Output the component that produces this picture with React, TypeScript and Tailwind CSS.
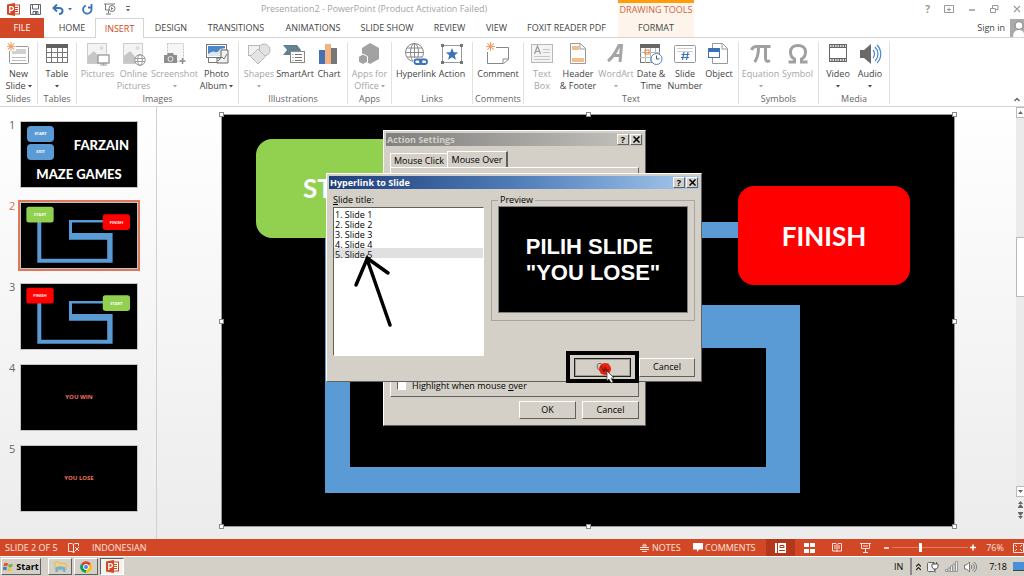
import type { ReactNode } from "react";

const BLUE = "#5b9bd5";
const GREEN = "#92d050";
const RED = "#ff0000";

function Svg({ w, h, children }: { w: number; h: number; children: ReactNode }) {
  return (
    <svg width={w} height={h} viewBox={`0 0 ${w} ${h}`} fill="none" className="block shrink-0" aria-hidden="true">
      {children}
    </svg>
  );
}

function PowerPointIcon() {
  return (
    <Svg w={13} h={13}>
      <rect x="6" y="2" width="6.5" height="9" fill="#fff" stroke="#d24726" />
      <path d="M8 4.5h3M8 6.5h3M8 8.5h3" stroke="#d24726" />
      <path d="M0 1.5 8 0v13L0 11.5z" fill="#d24726" />
      <path d="M2.8 10V3.6h1.7a1.8 1.8 0 0 1 0 3.7H2.8" stroke="#fff" strokeWidth="1.3" />
    </Svg>
  );
}

/* ---------- ribbon icons, 24 x 24 ---------- */

const G = "#777";
const L = "#b8b8b8";

const spark = (
  <path d="M5 0v10M0 5h10M1.5 1.5l7 7M8.5 1.5l-7 7" stroke="#f3a06b" strokeWidth="1.2" />
);

const icons: Record<string, ReactNode> = {
  newSlide: (
    <>
      <rect x="2.5" y="4.5" width="19" height="17" rx="1" fill="#fff" stroke="#999" />
      <rect x="5" y="7" width="14" height="5" fill="#d0d0d0" />
      <path d="M5 15.5h14M5 18.5h14" stroke="#bbb" />
      <rect x="0" y="0" width="9" height="9" fill="#fff" />
      <g transform="translate(-.5 0) scale(.9)">{spark}</g>
    </>
  ),
  table: (
    <>
      <rect x="1.5" y="2.5" width="21" height="18" fill="#fff" stroke={G} />
      <rect x="1" y="2" width="22" height="4" fill="#606060" />
      <path d="M1 10.5h22M1 15.5h22M6.5 6v15M12.5 6v15M17.5 6v15" stroke={G} />
    </>
  ),
  pictures: (
    <>
      <rect x="1.5" y="1.5" width="19" height="20" fill="#f4f4f4" stroke="#ccc" />
      <circle cx="15.5" cy="6" r="2" fill="#ddd" />
      <path d="M2 21V14l6-5 7 8v4z" fill="#c6c6c6" />
      <rect x="12" y="13" width="11" height="8" fill="#fff" stroke="#999" strokeWidth="1.3" />
      <path d="M17.5 21v2M14 23h7" stroke="#999" strokeWidth="1.2" />
    </>
  ),
  online: (
    <>
      <rect x="1.5" y="1.5" width="19" height="20" fill="#f4f4f4" stroke="#ccc" />
      <circle cx="15.5" cy="6" r="2" fill="#ddd" />
      <path d="M2 21V14l6-5 7 8v4z" fill="#c6c6c6" />
      <circle cx="18" cy="18" r="5.3" fill="#fff" stroke="#999" />
      <ellipse cx="18" cy="18" rx="2.3" ry="5.3" stroke="#999" />
      <path d="M13 16.5h10M13 19.5h10" stroke="#999" />
    </>
  ),
  screenshot: (
    <>
      <rect x="4.5" y="1.5" width="16" height="18" fill="#f6f6f6" stroke="#c4c4c4" strokeDasharray="2 1" />
      <path d="M1 13h3l1-2h5l1 2h3v8H1z" fill="#8e8e8e" />
      <circle cx="7.5" cy="17" r="2.5" fill="#8e8e8e" stroke="#eee" />
      <path d="M19.5 16v6M16.500 19h6" stroke="#8e8e8e" strokeWidth="1.5" />
    </>
  ),
  photoAlbum: (
    <>
      <rect x="1.5" y="2.5" width="20" height="13" fill="#fff" stroke={G} />
      <rect x="3" y="4" width="17" height="10" fill="#4a86c8" />
      <path d="M3 12c3-2 5-3 7-2s4-1 5-3l5-1v8H3z" fill="#dfe7ee" />
      <path d="M3.5 16v4.500h10" stroke={G} />
      <path d="M12 16h4V8h7v13H12z" fill="#f0f0f0" stroke="#666" />
      <path d="m13 19 4-4 2 2 3-5" stroke="#777" />
    </>
  ),
  shapes: (
    <>
      <circle cx="17" cy="8" r="6" fill="#e2e2e2" stroke={L} />
      <rect x="1.5" y="3.5" width="11" height="10" fill="#f1f1f1" stroke={L} />
      <path d="m11 7 7.5 7.5L11 22l-7.5-7.5z" fill="#e4e4e4" stroke={L} />
    </>
  ),
  smartArt: (
    <>
      <path d="M0 3h14l4 5-4 5H0l4-5z" fill="#5f7f96" />
      <path d="M3 6h11M5 9h10" stroke="#86a774" strokeDasharray="1 2" />
      <rect x="7.5" y="9.5" width="14" height="11" fill="#fff" stroke="#888" />
      <path d="M9.5 12.5h1M12 12.5h7M9.5 15.5h1M12 15.5h7M9.5 18.5h1M12 18.5h7" stroke="#777" />
    </>
  ),
  chart: (
    <>
      <rect x="2" y="8" width="6" height="14" fill="#4472b4" />
      <rect x="8" y="2" width="6" height="20" fill="#f4b183" />
      <rect x="14" y="6" width="6" height="16" fill="#777" />
    </>
  ),
  apps: (
    <>
      <path d="m12 1 9 5v11l-9 5-8-5V6z" fill="#a2a2a2" />
      <path d="m5 12 4.500 2.500v5.500L5 22.500.5 20v-5.500z" fill="#a2a2a2" stroke="#fff" />
    </>
  ),
  hyperlink: (
    <>
      <circle cx="10.5" cy="10.5" r="9" fill="#fff" stroke="#888" />
      <ellipse cx="10.5" cy="10.5" rx="4" ry="9" stroke="#888" />
      <path d="M10.5 1.5v18M1.5 10.5h18M3 6h15M3 15h15" stroke="#888" />
      <rect x="9" y="16" width="15" height="8" fill="#fff" />
      <rect x="10.5" y="17.500" width="7" height="4.500" rx="2.200" stroke="#3c72b8" strokeWidth="1.8" />
      <rect x="16" y="17.500" width="7" height="4.500" rx="2.200" stroke="#3c72b8" strokeWidth="1.8" />
    </>
  ),
  action: (
    <>
      <rect x="2.5" y="3.5" width="19" height="17" fill="#fff" stroke="#999" />
      <path d="M1 2h3v3H1zM20 2h3v3h-3zM1 19h3v3H1zM20 19h3v3h-3z" fill="#777" />
      <path d="m12 6 1.7 4.2 4.5.3-3.5 2.8 1.2 4.4L12 15.2l-3.900 2.500 1.200-4.400-3.500-2.800 4.500-.3z" fill="#3c72b8" />
    </>
  ),
  comment: (
    <>
      <path d="M1.5 5.5h21v12l-5 4h-16z" fill="#fff" stroke="#888" />
      <path d="M22 17h-5v4" stroke="#888" />
      <rect x="0" y="0" width="10" height="10" fill="#fff" />
      <g transform="scale(.9)">{spark}</g>
    </>
  ),
  textBox: (
    <>
      <rect x="1.5" y="2.5" width="21" height="18" fill="#f3f3f3" stroke={L} />
      <path d="M13 7.5h7M13 10.5h7M4 14.5h16M4 17.5h16" stroke="#c8c8c8" />
      <path d="m4.5 12 3-8 3 8M5.5 9.5h4" stroke="#999" strokeWidth="1.2" />
    </>
  ),
  headerFooter: (
    <>
      <path d="M4.5 1.5h10l5 5v15h-15z" fill="#fff" stroke="#999" />
      <path d="M14 2v5h5" stroke="#999" />
      <path d="M6 4h7v4H6zM6 16h12v4H6z" fill="#f6bd8c" />
    </>
  ),
  wordArt: <path d="M4 19C8 16 12 10 15 3.500h2.500L16 20M8 13.500h8" stroke="#a5a5a5" strokeWidth="3" />,
  dateTime: (
    <>
      <rect x="1.5" y="2.5" width="19" height="18" fill="#fff" stroke={G} />
      <rect x="1" y="2" width="20" height="4" fill="#666" />
      <path d="M1 10.5h20M1 15.5h20M6.5 6v15M11.5 6v15M16.5 6v15" stroke="#bbb" />
      <rect x="6" y="8" width="4" height="4" stroke="#ee7d31" />
      <circle cx="17.5" cy="17" r="5.5" fill="#fff" stroke="#4a86c8" />
      <path d="M17.5 13.5V17h3" stroke="#555" />
    </>
  ),
  slideNumber: (
    <>
      <rect x="1.5" y="3.5" width="21" height="17" rx="1" fill="#fff" stroke="#999" />
      <path d="M4 6.5h16M4 9.5h16" stroke="#d0d0d0" />
      <path d="m11 10-1.5 8M15 10l-1.5 8M8.5 12.5h8M8 15.5h8" stroke="#3c72b8" strokeWidth="1.2" />
    </>
  ),
  object: (
    <>
      <path d="M5.5 1.5h10l5 5v15h-15z" fill="#fff" stroke="#999" />
      <path d="M15 2v5h5" stroke="#999" />
      <rect x="1.5" y="6.5" width="11" height="9" fill="#fff" stroke="#3c72b8" />
      <path d="M1 6h12v4H1z" fill="#3c72b8" />
    </>
  ),
  equation: (
    <path d="M2.500 8c1-3 2.5-3.500 5-3.500h14M9.5 5c0 7-.5 11-4 15M16.5 5v11c0 3.500 2 4 4.500 2.500" stroke="#a0a0a0" strokeWidth="3" />
  ),
  symbol: (
    <path d="M2.500 20h6v-3C5.5 15.500 4.500 13 4.500 10c0-4 3-6.500 7.500-6.500s7.500 2.500 7.500 6.500c0 3-1 5.500-4 7v3h6" stroke="#a0a0a0" strokeWidth="3" />
  ),
  video: (
    <>
      <rect x="3" y="2" width="18" height="18" fill="#666" />
      <rect x="4" y="6" width="16" height="10" fill="#fff" />
      <path d="M4 4h16M4 18h16" stroke="#fff" strokeWidth="1.5" strokeDasharray="1.5 1" />
    </>
  ),
  audio: (
    <>
      <path d="M2 8h4l7-6v20l-7-6H2z" fill="#6a6a6a" />
      <path d="M15 8c2 2 2 6 0 8M17 5c4 4 4 10 0 14M19 3c5 5 5 13 0 18" stroke="#4a86c8" strokeWidth="1.2" />
    </>
  ),
};

type Tool = { icon: string; lines: string[]; w: string; off?: boolean; drop?: boolean };

const groups: { name: string; w: string; tools: Tool[] }[] = [
  { name: "Slides", w: "w-[38px]", tools: [{ icon: "newSlide", lines: ["New", "Slide"], w: "w-9", drop: true }] },
  { name: "Tables", w: "w-[39px]", tools: [{ icon: "table", lines: ["Table"], w: "w-9", drop: true }] },
  {
    name: "Images",
    w: "w-[162px]",
    tools: [
      { icon: "pictures", lines: ["Pictures"], w: "w-9", off: true },
      { icon: "online", lines: ["Online", "Pictures"], w: "w-9", off: true },
      { icon: "screenshot", lines: ["Screenshot"], w: "w-[46px]", off: true, drop: true },
      { icon: "photoAlbum", lines: ["Photo", "Album"], w: "w-[38px]", drop: true },
    ],
  },
  {
    name: "Illustrations",
    w: "w-[109px]",
    tools: [
      { icon: "shapes", lines: ["Shapes"], w: "w-9", off: true, drop: true },
      { icon: "smartArt", lines: ["SmartArt"], w: "w-9" },
      { icon: "chart", lines: ["Chart"], w: "w-8" },
    ],
  },
  { name: "Apps", w: "w-[44px]", tools: [{ icon: "apps", lines: ["Apps for", "Office"], w: "w-10", off: true, drop: true }] },
  {
    name: "Links",
    w: "w-[81px]",
    tools: [
      { icon: "hyperlink", lines: ["Hyperlink"], w: "w-10" },
      { icon: "action", lines: ["Action"], w: "w-8" },
    ],
  },
  { name: "Comments", w: "w-[51px]", tools: [{ icon: "comment", lines: ["Comment"], w: "w-[46px]" }] },
  {
    name: "Text",
    w: "w-[215px]",
    tools: [
      { icon: "textBox", lines: ["Text", "Box"], w: "w-8", off: true },
      { icon: "headerFooter", lines: ["Header", "& Footer"], w: "w-10" },
      { icon: "wordArt", lines: ["WordArt"], w: "w-9", off: true, drop: true },
      { icon: "dateTime", lines: ["Date &", "Time"], w: "w-[34px]" },
      { icon: "slideNumber", lines: ["Slide", "Number"], w: "w-[34px]" },
      { icon: "object", lines: ["Object"], w: "w-[34px]" },
    ],
  },
  {
    name: "Symbols",
    w: "w-[80px]",
    tools: [
      { icon: "equation", lines: ["Equation"], w: "w-[38px]", off: true, drop: true },
      { icon: "symbol", lines: ["Symbol"], w: "w-9", off: true },
    ],
  },
  {
    name: "Media",
    w: "w-[71px]",
    tools: [
      { icon: "video", lines: ["Video"], w: "w-8", drop: true },
      { icon: "audio", lines: ["Audio"], w: "w-8", drop: true },
    ],
  },
];

function Caret() {
  return (
    <svg width="4" height="3" viewBox="0 0 4 3" className="inline-block shrink-0" aria-hidden="true">
      <path d="M0 0h4L2 2.5z" fill="currentColor" />
    </svg>
  );
}

function ToolButton({ tool }: { tool: Tool }) {
  return (
    <button
      type="button"
      className={`${tool.w} flex shrink-0 flex-col items-center whitespace-nowrap text-[9px] leading-3 ${tool.off ? "text-[#a6a6a6]" : "text-[#444]"}`}
    >
      <span className="mb-0.5">
        <Svg w={24} h={24}>{icons[tool.icon]}</Svg>
      </span>
      <span>{tool.lines[0]}</span>
      <span className="flex h-3 items-center justify-center gap-0.5">
        {tool.lines[1]}
        {tool.drop && <Caret />}
      </span>
    </button>
  );
}

function Ribbon() {
  return (
    <div className="flex h-[69px] shrink-0 border-b border-[#d4d4d4] bg-white pt-1">
      {groups.map((g) => (
        <section key={g.name} aria-label={g.name} className={`${g.w} mb-0.5 flex shrink-0 flex-col items-center justify-between border-r border-[#e1e1e1]`}>
          <div className="flex justify-center">
            {g.tools.map((t) => (
              <ToolButton key={t.icon} tool={t} />
            ))}
          </div>
          <div className="text-[9px] leading-[11px] text-[#666]">{g.name}</div>
        </section>
      ))}
      <button type="button" aria-label="Collapse the ribbon" className="mt-auto mr-1 mb-1 ml-auto text-[#666]">
        <Svg w={6} h={5}>
          <path d="m.5 4 2.5-2.5L5.5 4" stroke="currentColor" strokeWidth="1.5" />
        </Svg>
      </button>
    </div>
  );
}

/* ---------- title bar and tabs ---------- */

const tabs = [
  { name: "HOME", w: "w-[46px]" },
  { name: "INSERT", w: "w-[49px]" },
  { name: "DESIGN", w: "w-[54px]" },
  { name: "TRANSITIONS", w: "w-[76px]" },
  { name: "ANIMATIONS", w: "w-[78px]" },
  { name: "SLIDE SHOW", w: "w-[70px]" },
  { name: "REVIEW", w: "w-[55px]" },
  { name: "VIEW", w: "w-[39px]" },
  { name: "FOXIT READER PDF", w: "w-[101px]" },
];

function Header() {
  return (
    <header className="flex h-[38px] shrink-0 bg-white">
      <div className="flex w-[618px] shrink-0 flex-col">
        <div className="flex h-[18px] items-center pl-[7px] text-[#3c72b8]">
          <PowerPointIcon />
          <button type="button" aria-label="Save" className="ml-[10px] text-[#666]">
            <Svg w={11} h={11}>
              <path d="M.5.5h10v10H.5zM2.5 1v4h6V1M3 10.5V7.500h5v3" stroke="currentColor" />
              <path d="M5 8h2v2H5z" fill="#3c72b8" />
            </Svg>
          </button>
          <button type="button" aria-label="Undo" className="ml-[11px] flex items-center gap-1">
            <Svg w={12} h={11}>
              <path d="M5 .5 1.5 4 5 7.500M2 4h5c5 0 4.500 6 0 6" stroke="currentColor" strokeWidth="2" />
            </Svg>
            <Caret />
          </button>
          <button type="button" aria-label="Repeat" className="ml-[10px]">
            <Svg w={11} h={11}>
              <path d="M4 1.5a4.200 4.200 0 1 0 5 2M6 3.500h3.500V0" stroke="currentColor" strokeWidth="1.8" />
            </Svg>
          </button>
          <button type="button" aria-label="Start slide show" className="ml-[11px] text-[#777]">
            <Svg w={12} h={12}>
              <path d="M0 1h11M1.5 1v6H5M4.5 7.500v3M2 11h5" stroke="currentColor" />
              <circle cx="8" cy="5.5" r="3" fill="#fff" stroke="currentColor" />
              <path d="M7 4v3l2.500-1.500z" fill="currentColor" />
            </Svg>
          </button>
          <button type="button" aria-label="Customize toolbar" className="ml-[10px] text-[#666]">
            <Svg w={4} h={6}>
              <path d="M0 .5h4" stroke="currentColor" />
              <path d="M0 3h4L2 5.500z" fill="currentColor" />
            </Svg>
          </button>
          <h1 className="flex-1 text-center text-[9px] text-[#a3a3a3]">Presentation2 - PowerPoint (Product Activation Failed)</h1>
        </div>
        <nav aria-label="Ribbon tabs" className="flex h-5 text-[9px] text-[#444]">
          <button type="button" className="w-11 bg-[#d24726] text-white">FILE</button>
          <div className="flex flex-1 border-b border-[#d4d4d4] pl-[5px]">
            {tabs.map((t) => (
              <button
                key={t.name}
                type="button"
                className={`${t.w} shrink-0 whitespace-nowrap text-center ${t.name === "INSERT" ? "-mb-px border-x border-t border-[#d4d4d4] bg-white text-[#d24726]" : ""}`}
              >
                {t.name}
              </button>
            ))}
          </div>
        </nav>
      </div>
      <button type="button" className="flex w-[76px] shrink-0 flex-col items-center border-t-[3px] border-b border-t-[#ff9d0a] border-b-[#d4d4d4] bg-[#fdf5ec] text-[9px]">
        <span className="h-[15px] leading-[14px] text-[#cf6340]">DRAWING TOOLS</span>
        <span className="leading-[19px] text-[#444]">FORMAT</span>
      </button>
      <div className="flex flex-1 flex-col border-b border-[#d4d4d4]">
        <div className="flex h-[18px] items-center justify-end gap-[14px] pr-[3px] text-[#999]">
          <button type="button" aria-label="Help" className="text-[10px] font-bold">?</button>
          <button type="button" aria-label="Ribbon display options">
            <Svg w={10} h={8}><path d="M.5.5h9v7h-9zM5 6.500v-4M3 4.500h4" stroke="currentColor" /></Svg>
          </button>
          <button type="button" aria-label="Minimize">
            <Svg w={8} h={8}><path d="M1 5h6" stroke="currentColor" strokeWidth="1.5" /></Svg>
          </button>
          <button type="button" aria-label="Restore">
            <Svg w={9} h={8}><path d="M.5 3.500h5v4h-5zM2.500 3V.5h5.500v4H6" stroke="currentColor" /></Svg>
          </button>
          <button type="button" aria-label="Close">
            <Svg w={8} h={8}><path d="m1 1 6 6M7 1 1 7" stroke="currentColor" strokeWidth="1.2" /></Svg>
          </button>
        </div>
        <div className="flex flex-1 items-center justify-end gap-[5px] text-[9px] text-[#444]">
          <a href="#signin">Sign in</a>
          <Svg w={14} h={18}>
            <rect width="14" height="18" fill="#aaa" />
            <circle cx="9" cy="6.500" r="4" fill="#fff" stroke="#999" strokeWidth="1.500" />
            <path d="M3 18c0-4 2-7 6-7 3 0 5 2 5 4v3z" fill="#fff" />
          </Svg>
        </div>
      </div>
    </header>
  );
}

/* ---------- slides ---------- */

function MazeSlide({ first, second }: { first: "START" | "FINISH"; second: "START" | "FINISH" }) {
  const fill = { START: GREEN, FINISH: RED };
  return (
    <svg viewBox="0 0 732 411" preserveAspectRatio="none" className="block h-full w-full bg-black" role="img" aria-label="Maze">
      <path
        fill={BLUE}
        d="M103 110h25v242h416V233H303V107h225v16H322v67h256v188H103z"
      />
      <rect x="34" y="24" width="172" height="99" rx="16" fill={fill[first]} />
      <rect x="516" y="71" width="172" height="99" rx="16" fill={fill[second]} />
      <g fill="#fff" textAnchor="middle" className="font-['Lato',sans-serif] text-[26px] font-bold">
        <text x="120" y="83">{first}</text>
        <text x="602" y="131">{second}</text>
      </g>
    </svg>
  );
}

function TitleSlide() {
  return (
    <div className="relative h-full w-full bg-black text-white">
      <div className="absolute top-1 left-1.5 flex flex-col gap-0.5 text-center text-[4px] leading-4 font-bold">
        <div className="h-4 w-[27px] rounded-sm bg-[#5b9bd5]">START</div>
        <div className="h-4 w-[27px] rounded-sm bg-[#5b9bd5]">EXIT</div>
      </div>
      <div className="absolute top-4 right-2 font-['Lato',sans-serif] text-[13px] leading-[14px] font-black">FARZAIN</div>
      <div className="absolute inset-x-0 top-[45px] text-center font-['Lato',sans-serif] text-[13px] leading-[14px] font-black">MAZE GAMES</div>
    </div>
  );
}

function WordSlide({ text }: { text: string }) {
  return (
    <div className="flex h-full items-center justify-center bg-black text-[6px] font-bold text-[#f0705a]">{text}</div>
  );
}

const slides: ReactNode[] = [
  <TitleSlide />,
  <MazeSlide first="START" second="FINISH" />,
  <MazeSlide first="FINISH" second="START" />,
  <WordSlide text="YOU WIN" />,
  <WordSlide text="YOU LOSE" />,
];

function Thumbnails() {
  return (
    <ol className="flex w-[157px] shrink-0 flex-col gap-[14px] border-r border-[#d0d0d0] pt-[14px]">
      {slides.map((s, i) => (
        <li key={i} className="flex">
          <span className={`-mt-[3px] w-5 pl-[9px] text-[11px] leading-[14px] ${i === 1 ? "text-[#d9694c]" : "text-[#666]"}`}>{i + 1}</span>
          <div className={`h-[67px] w-[118px] border border-[#c4c4c4] ${i === 1 ? "outline-2 outline-[#e0775a]" : ""}`}>{s}</div>
        </li>
      ))}
    </ol>
  );
}

/* ---------- dialogs ---------- */

const raised = "border border-t-white border-l-white border-r-[#606060] border-b-[#606060] bg-[#d4d0c8]";

function TitleBar({ title, tone }: { title: string; tone: string }) {
  return (
    <div className={`flex h-[13px] items-center gap-px pr-px pl-px text-[9px] leading-3 font-bold ${tone}`}>
      <h2 className="flex-1">{title}</h2>
      <button type="button" aria-label="Help" className={`${raised} flex h-[11px] w-3 items-center justify-center text-[9px] font-bold text-black`}>?</button>
      <button type="button" aria-label="Close" className={`${raised} flex h-[11px] w-3 items-center justify-center text-black`}>
        <Svg w={7} h={7}><path d="m.5.5 6 6M6.500.5l-6 6" stroke="currentColor" strokeWidth="1.5" /></Svg>
      </button>
    </div>
  );
}

function ActionSettings() {
  return (
    <div role="dialog" aria-label="Action Settings" className={`absolute top-[15px] left-[161px] flex h-[296px] w-[263px] flex-col p-0.5 text-[9px] text-black ${raised}`}>
      <TitleBar title="Action Settings" tone="bg-linear-to-r from-[#808080] to-[#c6c4be] text-[#d4d0c8]" />
      <div className="mt-[5px] ml-1 flex h-4 items-end">
        <button type="button" className="h-[14px] w-[57px] border-t border-l border-white">Mouse Click</button>
        <button type="button" className="h-4 w-[61px] border-t border-r-2 border-l border-t-white border-r-[#606060] border-l-white">Mouse Over</button>
      </div>
      <div className="mx-1 flex flex-1 flex-col justify-end border border-t-white border-r-[#606060] border-b-[#606060] border-l-white pb-1 pl-1.5">
        <label className="flex items-center gap-1.5">
          <input type="checkbox" className="size-[9px] appearance-none border border-t-[#606060] border-r-white border-b-white border-l-[#606060] bg-white" />
          <span>Highlight when mouse <u>o</u>ver</span>
        </label>
      </div>
      <div className="mt-1 mr-1 mb-1 flex justify-end gap-1.5">
        <button type="button" className={`${raised} h-[18px] w-[57px]`}>OK</button>
        <button type="button" className={`${raised} h-[18px] w-[57px]`}>Cancel</button>
      </div>
    </div>
  );
}

function HyperlinkDialog() {
  return (
    <div role="dialog" aria-label="Hyperlink to Slide" className={`absolute top-[58px] left-[104px] flex h-[209px] w-[376px] flex-col p-0.5 text-[9px] leading-3 text-black ${raised}`}>
      <TitleBar title="Hyperlink to Slide" tone="bg-linear-to-r from-[#1f3f7a] via-[#4f7cb8] to-[#a6caf0] text-white" />
      <div className="flex gap-[7px] pt-[5px] pr-1 pl-1">
        <div className="flex w-[151px] flex-col gap-px">
          <label htmlFor="slide-title" className="leading-3"><u>S</u>lide title:</label>
          <select
            id="slide-title"
            size={5}
            defaultValue="5"
            className="h-[149px] appearance-none overflow-hidden border border-t-[#606060] border-r-white border-b-white border-l-[#606060] bg-white text-[9px] leading-[10px]"
          >
            {["1", "2", "3", "4", "5"].map((n) => (
              <option key={n} value={n} className="h-[10px] min-h-0 p-0 pl-px leading-[10px] checked:bg-[#e0e0e0]">
                {`${n}. Slide ${n}`}
              </option>
            ))}
          </select>
        </div>
        <fieldset className="h-[127px] flex-1 border border-[#a8a59e] px-1.5">
          <legend className="px-0.5 leading-3">Preview</legend>
          <div className="flex h-[107px] items-center justify-center border border-[#808080] bg-black font-['Liberation_Sans',Arial,sans-serif] text-[22px] leading-[26px] font-bold text-white">
            <p>PILIH SLIDE<br />"YOU LOSE"</p>
          </div>
        </fieldset>
      </div>
      <div className="-mt-[5px] -mb-1 flex items-center justify-end pr-1">
        <div className="flex h-[32px] w-[73px] items-center justify-center border-4 border-black">
          <button type="button" className="h-[19px] w-[57px] border border-[#222] text-[#555] outline -outline-offset-2 outline-[#a09d96]">OK</button>
        </div>
        <button type="button" className={`${raised} h-[19px] w-14`}>Cancel</button>
      </div>
    </div>
  );
}

function Annotations() {
  return (
    <svg viewBox="0 0 732 411" className="pointer-events-none absolute top-0 left-0 h-[411px] w-[732px]" aria-hidden="true">
      <path d="M98 66h5v17" stroke="#fff" strokeWidth="2" fill="none" />
      <path d="m168 210-23-66-11 26M145 143l21 15" stroke="#000" strokeWidth="3.5" strokeLinecap="round" fill="none" />
      <circle cx="383" cy="254" r="6" fill="#e8220c" />
      <path d="m379 251 3 6 1-5 3 5M380 255h7" stroke="#7a1208" fill="none" />
      <path d="M385 256v10l2-2 2 4 2-1-2-4h3z" fill="#fff" stroke="#333" strokeWidth=".7" />
    </svg>
  );
}

const handleSpots = [
  "-top-[3px] -left-[3px]",
  "-top-[3px] left-1/2 -ml-0.5",
  "-top-[3px] -right-[3px]",
  "top-1/2 -mt-0.5 -left-[3px]",
  "top-1/2 -mt-0.5 -right-[3px]",
  "-bottom-[3px] -left-[3px]",
  "-bottom-[3px] left-1/2 -ml-0.5",
  "-bottom-[3px] -right-[3px]",
];

function Editor() {
  return (
    <main className="min-w-0 flex-1 pt-2 pr-[62px] pb-[13px] pl-[65px]">
      <div className="relative h-full w-full outline outline-[#999]">
        <MazeSlide first="START" second="FINISH" />
        {handleSpots.map((c) => (
          <span key={c} className={`absolute size-[5px] border border-[#888] bg-white ${c}`} />
        ))}
        <ActionSettings />
        <HyperlinkDialog />
        <Annotations />
      </div>
    </main>
  );
}

function ScrollColumn() {
  return (
    <div className="flex w-2 shrink-0 flex-col items-center text-[#666]">
      <button type="button" aria-label="Scroll up" className="flex h-[11px] w-full items-center justify-center border border-r-0 border-[#bbb] bg-white">
        <Svg w={5} h={3}><path d="M0 3h5L2.5 0z" fill="currentColor" /></Svg>
      </button>
      <div className="flex w-full flex-1 flex-col bg-[#ebebeb] pt-[119px]">
        <div className="h-[60px] border border-r-0 border-[#bbb] bg-white" />
      </div>
      <button type="button" aria-label="Scroll down" className="flex h-[11px] w-full items-center justify-center border border-r-0 border-[#bbb] bg-white">
        <Svg w={5} h={3}><path d="M0 0h5L2.5 3z" fill="currentColor" /></Svg>
      </button>
      <button type="button" aria-label="Previous slide" className="mt-1">
        <Svg w={5} h={7}><path d="M0 3h5L2.5 0zM0 6h5L2.5 3zM0 6h5v1H0z" fill="currentColor" /></Svg>
      </button>
      <button type="button" aria-label="Next slide" className="mt-1 mb-5">
        <Svg w={5} h={7}><path d="M0 1h5L2.5 4zM0 4h5L2.5 7zM0 0h5v1H0z" fill="currentColor" /></Svg>
      </button>
    </div>
  );
}

/* ---------- bottom bars ---------- */

function StatusBar() {
  return (
    <footer className="flex h-[17px] shrink-0 items-center bg-[#d24726] pl-[5px] text-[9px] text-[#fbe6df]">
      <span className="w-[63px]">SLIDE 2 OF 5</span>
      <button type="button" aria-label="Spelling" className="w-6">
        <Svg w={12} h={10}>
          <path d="M5.5 2v7.500L4 8.500H.5v-8H4l1.500 1 1.500-1h3.500V3M5.500 9.500l1.500-1M7 4l4 4M11 4 7 8" stroke="currentColor" />
        </Svg>
      </button>
      <button type="button">INDONESIAN</button>
      <div className="ml-auto flex h-full items-center">
        <button type="button" className="flex w-[53px] items-center gap-[3px]">
          <Svg w={9} h={9}><path d="M0 4.500h9M0 6.500h9M2 8.500h5M2.500 3 4.500.8 6.500 3z" stroke="currentColor" /></Svg>
          NOTES
        </button>
        <button type="button" className="flex w-[73px] items-center gap-0.5">
          <Svg w={10} h={9}><path d="M0 0h10v6.500H6L4 9V6.500H0z" fill="#fff" /></Svg>
          COMMENTS
        </button>
        <button type="button" aria-label="Normal view" className="flex h-full w-[29px] items-center justify-center bg-[#b5371b] text-white">
          <Svg w={11} h={10}>
            <path d="M0 0h11v10H0z" fill="currentColor" />
            <path d="M2.500 0v10M5 2.500h4v2H5zM4 7.500h6" stroke="#b5371b" />
          </Svg>
        </button>
        <button type="button" aria-label="Slide sorter" className="flex w-7 justify-center text-white">
          <Svg w={11} h={10}><path d="M0 0h5v4H0zM6 0h5v4H6zM0 6h5v4H0zM6 6h5v4H6z" fill="currentColor" /></Svg>
        </button>
        <button type="button" aria-label="Reading view" className="flex w-7 justify-center">
          <Svg w={10} h={9}><path d="M5 1.500v7M.5.500H4l1 1 1-1h3.500v7.500H6l-1 .5-1-.5H.5zM2 3h2M2 5h2M6 3h2M6 5h2" stroke="currentColor" /></Svg>
        </button>
        <button type="button" aria-label="Slide show" className="mr-[5px] flex w-7 justify-center">
          <Svg w={11} h={10}><path d="M0 .5h11M1.500 1v4.500h8V1M3 3h5M5.500 6v3M3 9.500h5" stroke="currentColor" /></Svg>
        </button>
        <button type="button" aria-label="Zoom out" className="text-white">
          <Svg w={6} h={6}><path d="M0 3h5" stroke="currentColor" strokeWidth="1.5" /></Svg>
        </button>
        <input
          type="range"
          aria-label="Zoom"
          min={0}
          max={100}
          defaultValue={37}
          className="mx-0.5 h-[9px] w-[76px] appearance-none bg-linear-to-b from-transparent from-45% via-[#efb5a5] via-45% to-transparent to-55% [&::-webkit-slider-thumb]:h-[9px] [&::-webkit-slider-thumb]:w-[3px] [&::-webkit-slider-thumb]:appearance-none [&::-webkit-slider-thumb]:bg-white"
        />
        <button type="button" aria-label="Zoom in" className="text-white">
          <Svg w={7} h={7}><path d="M0 3.500h6M3 .5v6" stroke="currentColor" strokeWidth="1.5" /></Svg>
        </button>
        <button type="button" className="w-[36px] text-center">76%</button>
        <button type="button" aria-label="Fit slide to window">
          <Svg w={11} h={10}><path d="M.5.5h10v9H.5zM2 2l2 2M9 2 7 4M2 8l2-2M9 8 7 6" stroke="currentColor" /></Svg>
        </button>
      </div>
    </footer>
  );
}

function Taskbar() {
  return (
    <div className="flex h-5 shrink-0 items-center gap-[7px] border-t border-white bg-[#d4d0c8] pl-px text-[9px] text-black">
      <button type="button" className={`${raised} flex h-[17px] w-10 items-center justify-center gap-0.5 font-bold`}>
        <Svg w={11} h={11}>
          <path d="M1 2.500c1.500-1 3-1 4 0L4.300 5.500c-1.300-1-2.600-1-4 0z" fill="#e8512a" />
          <path d="M5.800 2.800c1.400 1 2.800 1 4.200 0l-.8 3c-1.400 1-2.800 1-4 0z" fill="#6cb33f" />
          <path d="M0 6.500c1.500-1 3-1 4 0l-.7 3c-1.300-1-2.300-1-3.300 0z" fill="#3c7fd0" />
          <path d="M5 6.800c1.400 1 2.800 1 4 0l-.8 3c-1.400 1-2.700 1-4 0z" fill="#f6c12c" />
        </Svg>
        Start
      </button>
      <div className="flex gap-0.5">
        <button type="button" aria-label="Explorer" className={`${raised} flex h-[17px] w-6 items-center justify-center`}>
          <Svg w={13} h={11}>
            <path d="M1 1h4l1 1.500h6V9H1z" fill="#f2d27a" stroke="#d6b14e" strokeWidth=".7" />
            <path d="M1.500 11V7.500c0-3 10-3 10 0V11H9V8.500H4V11z" fill="#6cb0e4" />
          </Svg>
        </button>
        <button type="button" aria-label="Chrome" className={`${raised} flex h-[17px] w-6 items-center justify-center`}>
          <Svg w={12} h={12}>
            <path d="M6 6 1 3a5.800 5.800 0 0 1 10 0z" fill="#db4437" />
            <path d="M6 6 11 3a5.800 5.800 0 0 1-5 8.800z" fill="#f4c20d" />
            <path d="M6 6v5.800A5.800 5.800 0 0 1 1 3z" fill="#0f9d58" />
            <circle cx="6" cy="6" r="2.5" fill="#4285f4" stroke="#fff" />
          </Svg>
        </button>
        <button type="button" aria-label="PowerPoint" className="flex h-[17px] w-6 items-center justify-center border border-t-[#606060] border-r-white border-b-white border-l-[#606060] bg-[#f4f2ee]">
          <PowerPointIcon />
        </button>
      </div>
      <span className="ml-auto">IN</span>
      <div className="flex h-[17px] items-center gap-1.5 border-l-2 border-[#888] pl-1">
        <Svg w={5} h={8}><path d="m0 3.500 2.500-2.500L5 3.500M0 7l2.500-2.500L5 7" stroke="#222" strokeWidth="1.2" /></Svg>
        <Svg w={12} h={12}>
          <rect x=".5" y="1.5" width="7" height="9" rx="1" fill="#eee" stroke="#666" />
          <path d="M5 3h6v3L9.500 8h-3L5 6zM6.500 1v2M9.500 1v2M8 8v3.500" fill="#fff" stroke="#555" />
        </Svg>
        <Svg w={13} h={11}>
          <path d="M.5 8.500h2v2h-2zM3 7h2v3.500H3zM5.500 5h2v5.500h-2zM8 3h2v7.500H8zM10.500.5h2v10h-2z" fill="#eee" stroke="#888" strokeWidth=".8" />
        </Svg>
        <Svg w={13} h={12}>
          <path d="M.5 4h2l3-3v10l-3-3h-2z" fill="#fff" stroke="#777" />
          <path d="M7 4c1 1 1 3 0 4M8.500 2.500c2.500 2 2.500 5 0 7M10 1c3.500 3 3.500 7 0 10" stroke="#777" />
        </Svg>
        <span className="ml-1.5">7:18</span>
        <Svg w={11} h={12}><rect y="1" width="11" height="8" fill="#4a90d9" /><path d="M0 9.500h11" stroke="#444" /></Svg>
      </div>
    </div>
  );
}

export default function App() {
  return (
    <div className="flex h-screen flex-col overflow-hidden bg-white font-['Open_Sans','Noto_Sans',sans-serif]">
      <Header />
      <Ribbon />
      <div className="flex min-h-0 flex-1 bg-linear-to-b from-white to-[#ececec]">
        <Thumbnails />
        <Editor />
        <ScrollColumn />
      </div>
      <StatusBar />
      <Taskbar />
    </div>
  );
}
